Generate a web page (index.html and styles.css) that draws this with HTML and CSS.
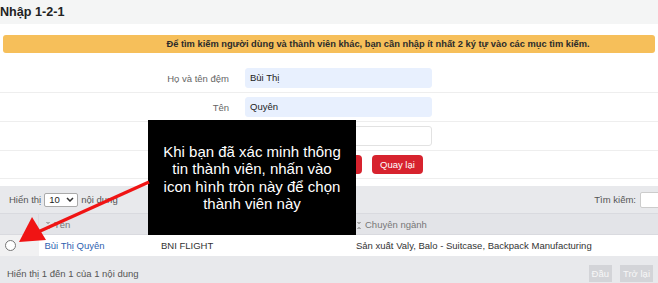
FILE: index.html
```html
<!DOCTYPE html>
<html lang="vi">
<head>
  <meta charset="UTF-8">
  <title>Nhập 1-2-1</title>
  <link rel="stylesheet" href="styles.css">
</head>
<body>
  <div class="page-head">
    <h1>Nhập 1-2-1</h1>
  </div>
  <div class="notice">Để tìm kiếm người dùng và thành viên khác, bạn cần nhập ít nhất 2 ký tự vào các mục tìm kiếm.</div>

  <form class="search-form">
    <div class="form-row">
      <label>Họ và tên đệm</label>
      <div class="field filled">Bùi Thị</div>
    </div>
    <div class="form-row">
      <label>Tên</label>
      <div class="field filled">Quyên</div>
    </div>
    <div class="form-row">
      <label></label>
      <div class="field"></div>
    </div>
    <div class="form-actions">
      <span class="btn-red btn-search" aria-label="Tìm kiếm"></span>
      <span class="btn-red">Quay lại</span>
    </div>
  </form>

  <div class="table-panel">
    <div class="table-tools">
      <div class="length">
        Hiển thị
        <span class="select-box">10
          <svg width="8" height="5" viewBox="0 0 8 5"><path d="M1 1l3 3 3-3" fill="none" stroke="#333" stroke-width="1.5"/></svg>
        </span>
        nội dung
      </div>
      <div class="filter">Tìm kiếm: <span class="filter-input"></span></div>
    </div>
    <table class="result">
      <thead>
        <tr>
          <th class="col-check"></th>
          <th class="col-name"><span class="sort"></span>Tên</th>
          <th class="col-org"></th>
          <th><span class="sort"></span>Chuyên ngành</th>
        </tr>
      </thead>
      <tbody>
        <tr>
          <td class="col-check"><span class="radio"></span></td>
          <td class="col-name"><a href="#">Bùi Thị Quyên</a></td>
          <td class="col-org">BNI FLIGHT</td>
          <td>Sản xuất Valy, Balo - Suitcase, Backpack Manufacturing</td>
        </tr>
      </tbody>
    </table>
    <div class="table-foot">
      <span>Hiển thị 1 đến 1 của 1 nội dung</span>
      <div class="pager">
        <span class="page-btn">Đầu</span>
        <span class="page-btn">Trở lại</span>
      </div>
    </div>
  </div>

  <!-- huong dan -->
  <div class="tip">Khi bạn đã xác minh thông<br>tin thành viên, nhấn vào<br>icon hình tròn này để chọn<br>thành viên này</div>
  <svg class="arrow" width="658" height="283" viewBox="0 0 658 283">
    <line x1="149" y1="182" x2="38" y2="232" stroke="#f01414" stroke-width="3.2"/>
    <polygon points="19,242 32,217 46,240" fill="#f01414"/>
  </svg>
</body>
</html>
```

FILE: styles.css
```css
body {
  margin: 0;
  width: 658px;
  height: 283px;
  overflow: hidden;
  position: relative;
  font-family: "Liberation Sans", Arial, sans-serif;
  font-size: 9.5px;
  color: #333;
  background-color: #fff;
}
.page-head {
  background-color: #f4f5f5;
  height: 24px;
}
.page-head h1 {
  margin: 0;
  font-size: 12.6px;
  line-height: 24px;
  color: #222;
}
.notice {
  margin: 11px 3px 0;
  height: 18px;
  line-height: 18px;
  background-color: #f6bf5a;
  border-radius: 3px;
  font-size: 9.3px;
  font-weight: bold;
  color: #2b2b2b;
  text-align: center;
  padding-left: 98px;
}
.search-form {
  margin-top: 11px;
}
.form-row {
  display: grid;
  grid-template-columns: 229px 187px;
  column-gap: 16px;
  align-items: center;
  padding: 4px 0;
  border-bottom: 1px solid #eee;
}
.form-row label {
  text-align: right;
  color: #666;
}
.field {
  height: 18px;
  line-height: 18px;
  padding: 0 4px;
  border: 1px solid #e2e2e2;
  border-radius: 3px;
  background-color: #fff;
  color: #222;
}
.field.filled {
  background-color: #e8f0fe;
  border-color: #e8f0fe;
}
.form-actions {
  display: flex;
  gap: 10px;
  padding: 4px 0 4px 310px;
  border-bottom: 1px solid #eee;
}
.btn-red {
  height: 19px;
  line-height: 19px;
  padding: 0 8px;
  background-color: #d7232e;
  color: #fff;
  border-radius: 4px;
}
.btn-search {
  width: 36px;
}
.table-panel {
  margin-top: 7px;
  background-color: #e8e9ec;
  overflow: hidden;
}
.table-tools {
  display: flex;
  justify-content: space-between;
  align-items: center;
  height: 27px;
  padding-left: 9px;
  color: #555;
}
.length {
  display: flex;
  align-items: center;
  gap: 3px;
}
.select-box {
  display: inline-flex;
  align-items: center;
  justify-content: space-between;
  box-sizing: border-box;
  width: 34px;
  height: 14px;
  padding: 0 3px 0 4px;
  background-color: #fff;
  border: 1px solid #aaa;
  border-radius: 2px;
  color: #222;
}
.filter {
  display: flex;
  align-items: center;
  gap: 4px;
  margin-right: -24px;
}
.filter-input {
  display: inline-block;
  width: 40px;
  height: 14px;
  background-color: #fff;
  border: 1px solid #ccc;
  border-radius: 2px;
}
.result {
  width: 100%;
  border-collapse: collapse;
}
.result th {
  height: 20px;
  padding: 0 6px;
  text-align: left;
  font-weight: normal;
  color: #777;
  background-color: #e3e4e8;
  border-top: 1px solid #d9dadf;
  border-bottom: 1px solid #d9dadf;
}
.result td {
  height: 21px;
  padding: 0 6px;
  background-color: #fff;
  color: #333;
}
.result .col-check {
  width: 26px;
  border-right: 1px solid #dadbe0;
}
.result td.col-check {
  background-color: #f1f1f2;
  border-right: none;
}
.result .col-name {
  width: 104px;
}
.result .col-org {
  width: 183px;
}
.result a {
  color: #2f62b0;
  text-decoration: none;
}
.sort {
  display: inline-block;
  width: 4px;
  height: 7px;
  margin: 0 4px 0 1px;
  vertical-align: -1px;
  background:
    linear-gradient(to top right, transparent 50%, #aaa 50%) 0 0 / 2px 3px no-repeat,
    linear-gradient(to top left, transparent 50%, #aaa 50%) 2px 0 / 2px 3px no-repeat,
    linear-gradient(to bottom right, transparent 50%, #aaa 50%) 0 4px / 2px 3px no-repeat,
    linear-gradient(to bottom left, transparent 50%, #aaa 50%) 2px 4px / 2px 3px no-repeat;
}
.radio {
  display: block;
  box-sizing: border-box;
  width: 11px;
  height: 11px;
  margin-left: -1px;
  border: 1px solid #777;
  border-radius: 50%;
  background-color: #fff;
}
.table-foot {
  display: flex;
  justify-content: space-between;
  align-items: center;
  box-sizing: border-box;
  height: 28px;
  padding: 6px 5px 0 7px;
  color: #555;
}
.pager {
  display: flex;
  gap: 8px;
}
.page-btn {
  height: 17px;
  line-height: 17px;
  padding: 0 3px;
  font-size: 9.5px;
  color: #f7f7f7;
  background-color: #d3d4d8;
}
.tip {
  position: absolute;
  left: 148px;
  top: 120px;
  width: 208px;
  height: 115px;
  display: flex;
  align-items: center;
  justify-content: center;
  text-align: center;
  background-color: #000;
  color: #fff;
  font-size: 15px;
  line-height: 17.5px;
}
.arrow {
  position: absolute;
  left: 0;
  top: 0;
  pointer-events: none;
}
```
